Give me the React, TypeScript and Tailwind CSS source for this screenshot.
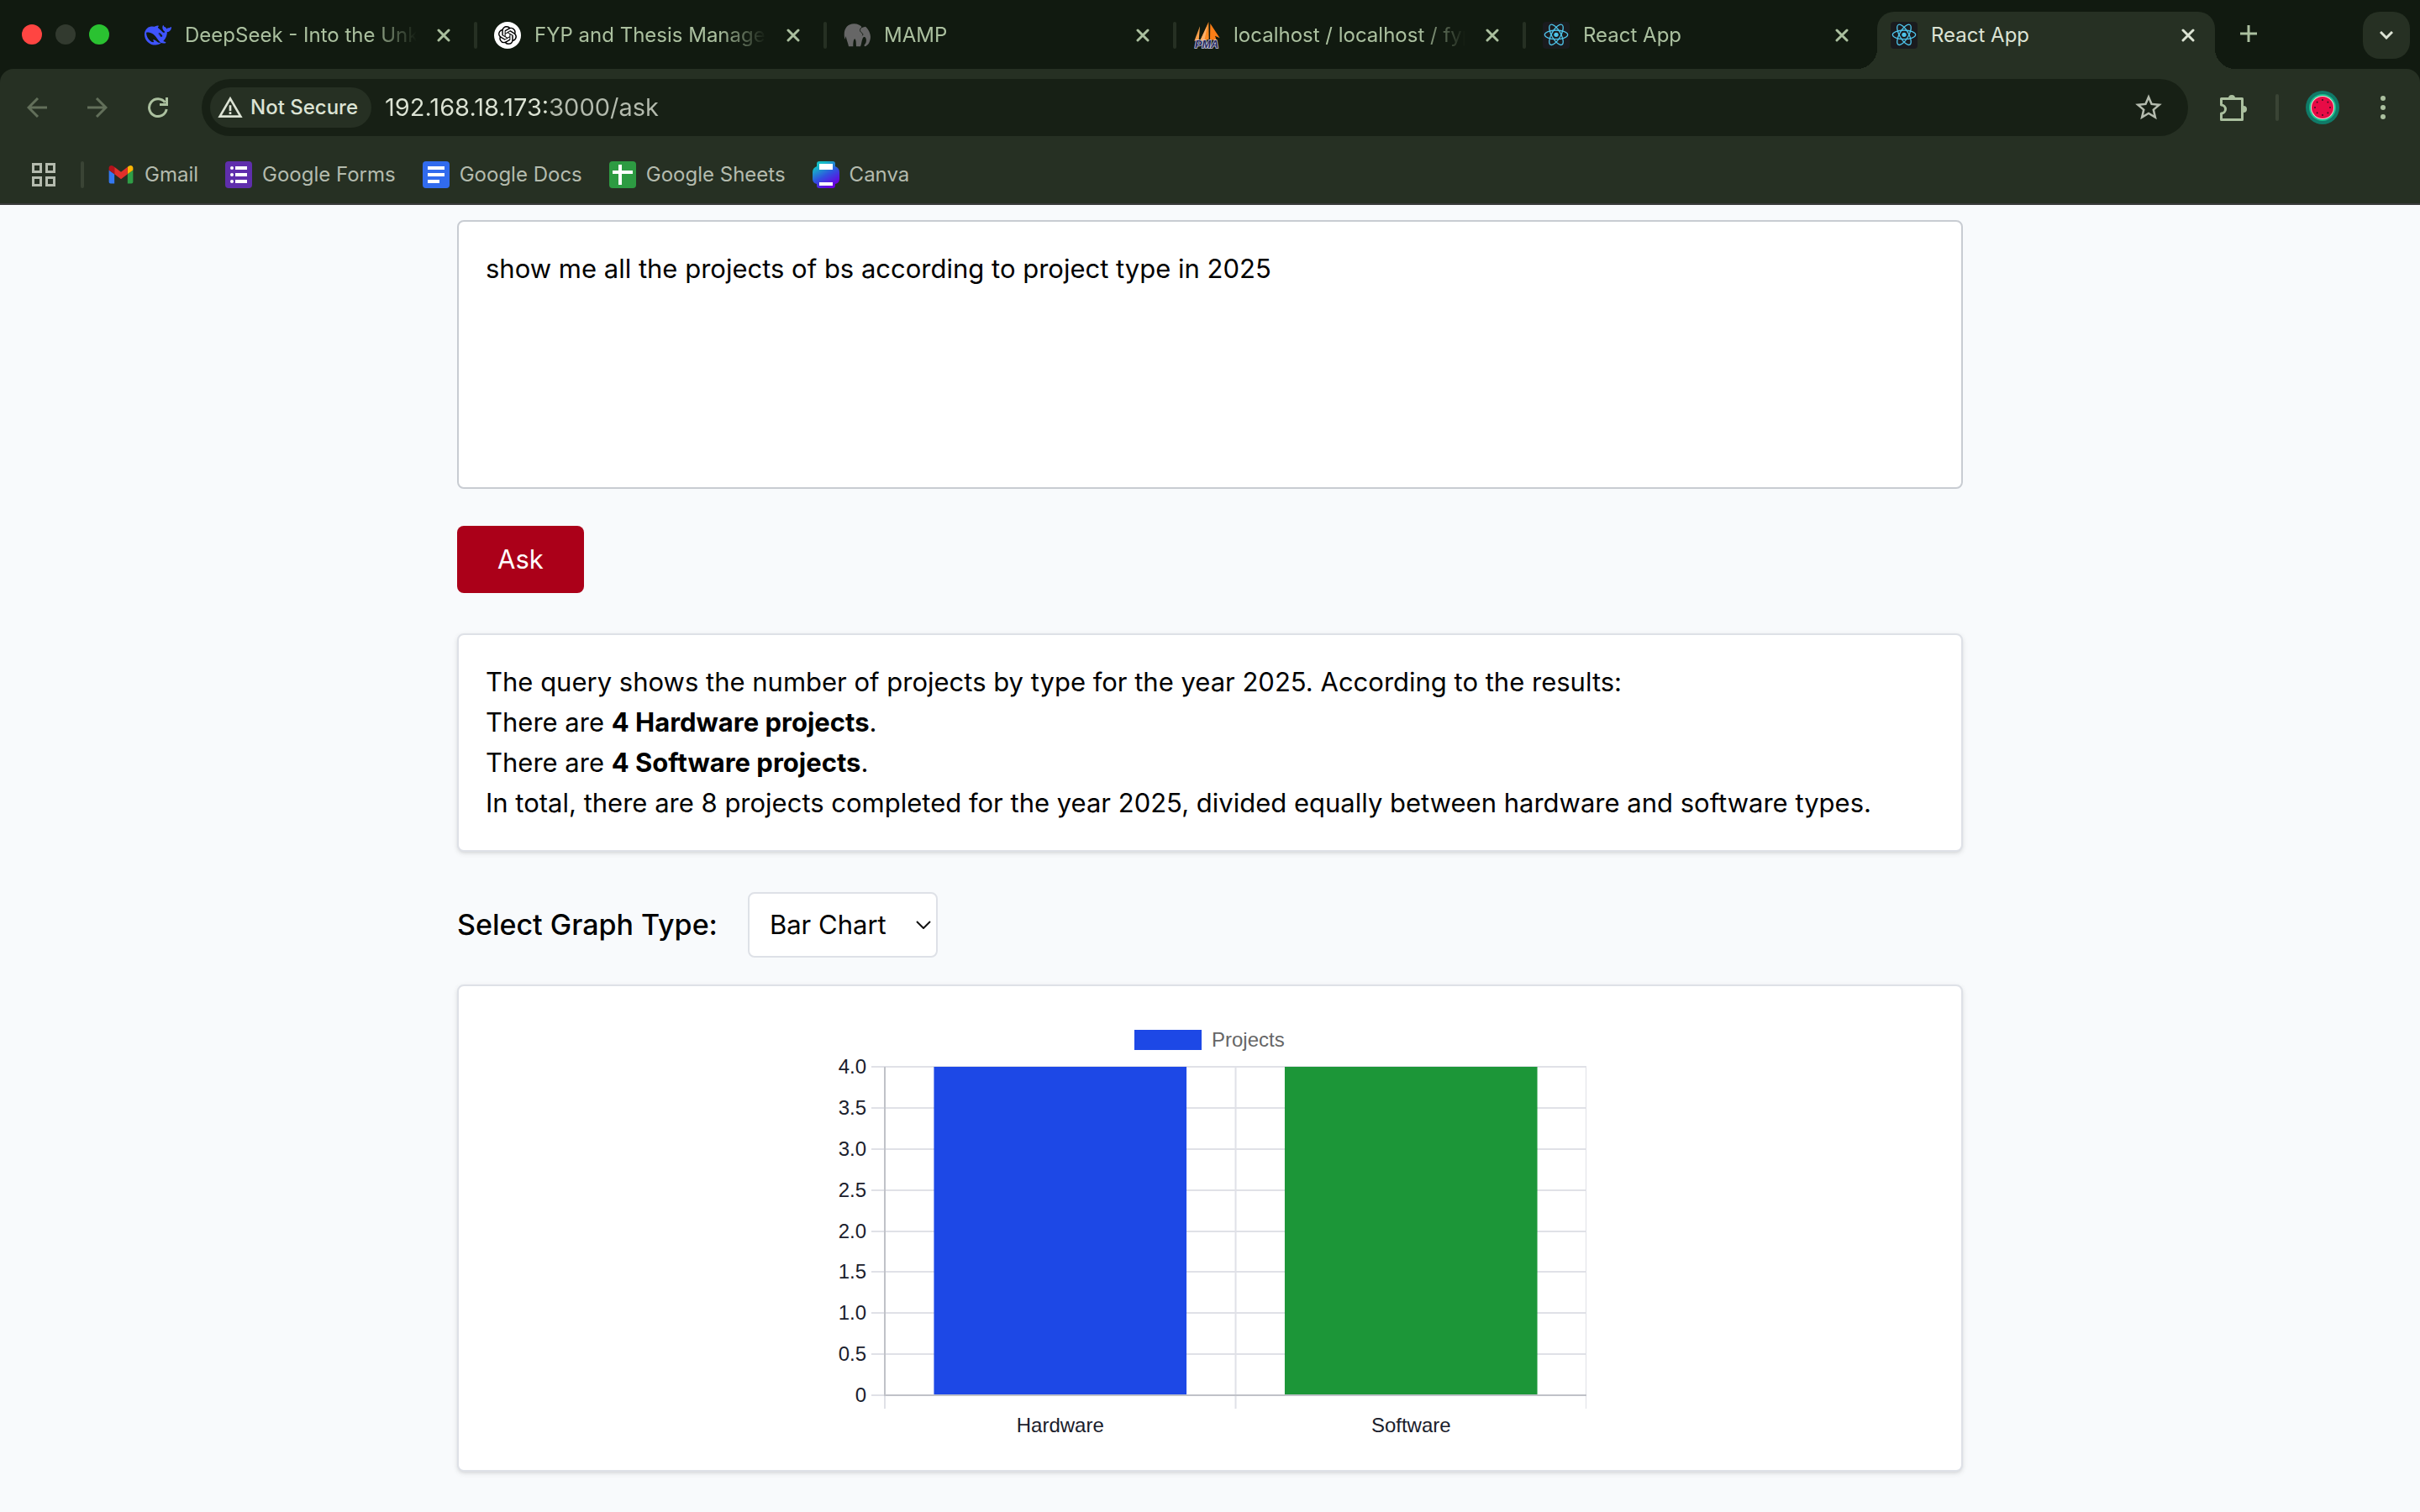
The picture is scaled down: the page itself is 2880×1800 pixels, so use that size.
import React, { useState } from 'react';
import { SiOpenai } from 'react-icons/si';
import { MdStarBorder, MdWarningAmber } from 'react-icons/md';

function DeepSeekIcon() {
  return (
    <svg viewBox="0 0 24 24" className="size-8" fill="#3f54fe" fillRule="evenodd" aria-hidden="true">
      <path d="M23.748 4.482c-.254-.124-.364.113-.512.234-.051.039-.094.09-.137.136-.372.397-.806.657-1.373.626-.829-.046-1.537.214-2.163.848-.133-.782-.575-1.248-1.247-1.548-.352-.156-.708-.311-.955-.65-.172-.241-.219-.51-.305-.774-.055-.16-.11-.323-.293-.35-.2-.031-.278.136-.356.276-.313.572-.434 1.202-.422 1.84.027 1.436.633 2.58 1.838 3.393.137.093.172.187.129.323-.082.28-.18.552-.266.833-.055.179-.137.217-.329.14a5.526 5.526 0 01-1.736-1.18c-.857-.828-1.631-1.742-2.597-2.458a11.365 11.365 0 00-.689-.471c-.985-.957.13-1.743.388-1.836.27-.098.093-.432-.779-.428-.872.004-1.67.295-2.687.684a3.055 3.055 0 01-.465.137 9.597 9.597 0 00-2.883-.102c-1.885.21-3.39 1.102-4.497 2.623C.082 8.606-.231 10.684.152 12.85c.403 2.284 1.569 4.175 3.36 5.653 1.858 1.533 3.997 2.284 6.438 2.14 1.482-.085 3.133-.284 4.994-1.86.47.234.962.327 1.78.397.63.059 1.236-.03 1.705-.128.735-.156.684-.837.419-.961-2.155-1.004-1.682-.595-2.113-.926 1.096-1.296 2.746-2.642 3.392-7.003.05-.347.007-.565 0-.845-.004-.17.035-.237.23-.256a4.173 4.173 0 001.545-.475c1.396-.763 1.96-2.015 2.093-3.517.02-.23-.004-.467-.247-.588zM11.581 18c-2.089-1.642-3.102-2.183-3.52-2.16-.392.024-.321.471-.235.763.09.288.207.486.371.739.114.167.192.416-.113.603-.673.416-1.842-.14-1.897-.167-1.361-.802-2.5-1.86-3.301-3.307-.774-1.393-1.224-2.887-1.298-4.482-.02-.386.093-.522.477-.592a4.696 4.696 0 011.529-.039c2.132.312 3.946 1.265 5.468 2.774.868.86 1.525 1.887 2.202 2.891.72 1.066 1.494 2.082 2.48 2.914.348.292.625.514.891.677-.802.09-2.14.11-3.054-.614zm1-6.44a.306.306 0 01.415-.287.302.302 0 01.2.288.306.306 0 01-.31.307.303.303 0 01-.304-.308zm3.11 1.596c-.2.081-.399.151-.59.16a1.245 1.245 0 01-.798-.254c-.274-.23-.47-.358-.552-.758a1.73 1.73 0 01.016-.588c.07-.327-.008-.537-.239-.727-.187-.156-.426-.199-.688-.199a.559.559 0 01-.254-.078c-.11-.054-.2-.19-.114-.358.028-.054.16-.186.192-.21.356-.202.767-.136 1.146.016.352.144.618.408 1.001.782.391.451.462.576.685.914.176.265.336.537.445.848.067.195-.019.354-.25.452z" />
    </svg>
  );
}

function ChatIcon() {
  return (
    <span className="flex size-8 items-center justify-center rounded-full bg-white text-black">
      <SiOpenai size={22} />
    </span>
  );
}

function ElephantIcon() {
  return (
    <svg viewBox="0 0 96 96" className="size-8" aria-hidden="true">
      <path
        fill="#666"
        d="M4 62C-3 30 10 7 37 7c13 0 23 5 29 13l12-3c9 8 18 22 18 37-1 18-8 30-20 34-4-2-3-5 1-9 4-6 5-14 2-21-3-6-9-5-11 1-4 9-4 19-8 29H45c-1-11 0-23-5-27-5 2-6 12-6 27H18C16 77 11 68 8 52c-2 3-1 7-4 10Z"
      />
      <path fill="none" stroke="#111a10" strokeWidth="3" d="M70 16c-11 6-15 14-8 21 5 4 9 7 5 12" />
    </svg>
  );
}

function SailIcon() {
  return (
    <svg viewBox="0 0 96 96" className="size-8" aria-hidden="true">
      <path fill="#f9a04a" d="M4 68 24 16 20 66Z" />
      <path fill="#fb8a24" d="M24 68 55 0 56 62 38 68Z" />
      <path fill="#fbb06a" d="M24 68 52 10 40 66Z" />
      <path fill="#fb7d16" d="M61 6 95 58 78 50 84 68 60 62Z" />
      <text
        x="48"
        y="94"
        textAnchor="middle"
        fontFamily="Liberation Sans, sans-serif"
        fontWeight="bold"
        fontStyle="italic"
        fontSize="38"
        fill="#27285c"
        stroke="#c9c9dd"
        strokeWidth="5"
        paintOrder="stroke"
      >
        PMA
      </text>
    </svg>
  );
}

function ReactIcon() {
  return (
    <svg viewBox="0 0 96 96" className="size-8" aria-hidden="true">
      <rect width="96" height="96" rx="12" fill="#1a1b1e" />
      <g fill="none" stroke="#4ec4ea" strokeWidth="4">
        <ellipse cx="48" cy="46" rx="41" ry="16" />
        <ellipse cx="48" cy="46" rx="41" ry="16" transform="rotate(60 48 46)" />
        <ellipse cx="48" cy="46" rx="41" ry="16" transform="rotate(120 48 46)" />
      </g>
      <circle cx="48" cy="46" r="8" fill="#4ec4ea" />
    </svg>
  );
}

function CloseIcon() {
  return (
    <svg viewBox="0 0 16 16" className="size-4" fill="none" stroke="currentColor" strokeWidth="3" strokeLinecap="round" aria-hidden="true">
      <path d="M2 2 14 14M14 2 2 14" />
    </svg>
  );
}

function ArrowIcon({ flip = false }: { flip?: boolean }) {
  return (
    <svg viewBox="0 0 24 24" className={flip ? 'size-6 -scale-x-100' : 'size-6'} fill="none" stroke="currentColor" strokeWidth="3" aria-hidden="true">
      <path d="M24 12H2M13 1 2 12 13 23" />
    </svg>
  );
}

function ReloadIcon() {
  return (
    <svg viewBox="0 0 24 24" className="size-6" fill="none" stroke="currentColor" strokeWidth="3" aria-hidden="true">
      <path d="M22.2 14A10.4 10.4 0 1 1 20.4 6" />
      <path d="M22.5 0v8.5H14" />
    </svg>
  );
}

function PuzzleIcon() {
  return (
    <svg viewBox="0 0 32 32" className="size-8" aria-hidden="true">
      <path
        fill="none"
        stroke="currentColor"
        strokeWidth="3"
        strokeLinejoin="round"
        d="M1.500 5.500h25v25h-25v-7.500a5 5 0 0 0 0-10Z"
      />
      <path fill="currentColor" d="M10 5a4 4 0 0 1 8 0ZM28 14a4 4 0 0 1 0 8Z" />
    </svg>
  );
}

const seeds = [0, 45, 90, 135, 180, 225, 270, 315];

function MelonAvatar() {
  return (
    <svg viewBox="0 0 40 40" className="size-10" aria-hidden="true">
      <circle cx="20" cy="20" r="20" fill="#107a68" />
      <circle cx="20" cy="20" r="16" fill="#1cc08f" />
      <circle cx="20" cy="20" r="14" fill="#f6d3cf" />
      <circle cx="20" cy="20" r="13" fill="#e80b46" />
      {seeds.map((angle) => (
        <circle key={angle} cx="20" cy="11" r="1" fill="#3a1020" transform={`rotate(${angle} 20 20)`} />
      ))}
    </svg>
  );
}

function GmailIcon() {
  return (
    <svg viewBox="47 27 98 98" className="size-8" aria-hidden="true">
      <path fill="#3478f0" d="M58 108h14V74L52 59v43c0 3.320 2.690 6 6 6" />
      <path fill="#2f9e46" d="M120 108h14c3.320 0 6-2.690 6-6V59l-20 15" />
      <path fill="#fbb504" d="M120 48v26l20-15v-8c0-7.420-8.470-11.650-14.400-7.200" />
      <path fill="#e2302a" d="M72 74V48l24 18 24-18v26L96 92" />
      <path fill="#b5121b" d="M52 51v8l20 15V48l-5.600-4.200c-5.940-4.450-14.400-.22-14.400 7.200" />
    </svg>
  );
}

function FormsIcon() {
  return (
    <svg viewBox="0 0 32 32" className="size-8" aria-hidden="true">
      <rect width="32" height="32" rx="4" fill="#5f2eac" />
      <g fill="#fff">
        <circle cx="8" cy="8" r="2" />
        <circle cx="8" cy="16" r="2" />
        <circle cx="8" cy="24" r="2" />
        <path d="M12 6h14v4H12ZM12 14h14v4H12ZM12 22h14v4H12Z" />
      </g>
    </svg>
  );
}

function DocsIcon() {
  return (
    <svg viewBox="0 0 32 32" className="size-8" aria-hidden="true">
      <rect width="32" height="32" rx="4" fill="#316bee" />
      <path fill="#fff" d="M6 6h20v4H6ZM6 14h20v4H6ZM6 22h14v4H6Z" />
    </svg>
  );
}

function SheetsIcon() {
  return (
    <svg viewBox="0 0 32 32" className="size-8" aria-hidden="true">
      <rect width="32" height="32" rx="4" fill="#2d9b42" />
      <path fill="#fff" d="M11 4h4v7h13v4H15v13h-4V15H4v-4h7Z" />
    </svg>
  );
}

function CanvaIcon() {
  return (
    <svg viewBox="0 0 32 32" className="size-8" aria-hidden="true">
      <defs>
        <linearGradient id="canva-fill" x1="6" y1="2" x2="22" y2="30" gradientUnits="userSpaceOnUse">
          <stop offset="0.1" stopColor="#14bcc6" />
          <stop offset="0.55" stopColor="#3050e0" />
          <stop offset="1" stopColor="#6a00e0" />
        </linearGradient>
      </defs>
      <path
        fill="url(#canva-fill)"
        d="M8 0h16q3 0 3 3v3q5 2 5 7v8q0 5-5 6v2q0 3-3 3H8q-3 0-3-3v-2q-5-1-5-6v-8q0-5 5-7V3q0-3 3-3Z"
      />
      <path fill="#fff" d="M8 3h16v7H8ZM8 25h16v4H8Z" />
    </svg>
  );
}

function AppsIcon() {
  return (
    <svg viewBox="0 0 28 28" className="size-7" fill="none" stroke="currentColor" strokeWidth="3" aria-hidden="true">
      <path d="M1.500 1.500h9v9h-9ZM17.500 1.500h9v9h-9ZM1.500 17.500h9v9h-9ZM17.500 17.500h9v9h-9Z" />
    </svg>
  );
}

const tabs = [
  { title: 'DeepSeek - Into the Unknown', icon: <DeepSeekIcon /> },
  { title: 'FYP and Thesis Management', icon: <ChatIcon /> },
  { title: 'MAMP', icon: <ElephantIcon /> },
  { title: 'localhost / localhost / fyp_db', icon: <SailIcon /> },
  { title: 'React App', icon: <ReactIcon /> },
];

const bookmarks = [
  { label: 'Gmail', icon: <GmailIcon /> },
  { label: 'Google Forms', icon: <FormsIcon /> },
  { label: 'Google Docs', icon: <DocsIcon /> },
  { label: 'Google Sheets', icon: <SheetsIcon /> },
  { label: 'Canva', icon: <CanvaIcon /> },
];

function TabStrip() {
  return (
    <div className="flex h-[82px] items-stretch bg-[#111a10] text-[24px] leading-8 text-[#abc09f]">
      <div className="flex w-[152px] shrink-0 items-center gap-4 pl-[26px]">
        <span className="size-6 rounded-full bg-[#ff4542]" />
        <span className="size-6 rounded-full bg-[#323a2f]" />
        <span className="size-6 rounded-full bg-[#2ac231]" />
      </div>
      <div role="tablist" className="flex min-w-0 items-stretch">
        {tabs.map((tab, i) => (
          <div key={i} className="flex w-[416px] min-w-0 items-center pt-0.5 pl-5">
            <button role="tab" aria-selected="false" className="flex min-w-0 flex-1 items-center gap-4 text-left">
              <span className="shrink-0">{tab.icon}</span>
              <span className="min-w-0 flex-1 overflow-hidden whitespace-nowrap [mask-image:linear-gradient(90deg,#000_calc(100%-56px),transparent)]">
                {tab.title}
              </span>
            </button>
            <button aria-label="Close tab" className="ml-4 flex size-8 shrink-0 items-center justify-center">
              <CloseIcon />
            </button>
            <span
              className={
                i < tabs.length - 1
                  ? 'ml-5 h-8 w-1 shrink-0 rounded-full bg-[#263023]'
                  : 'ml-5 h-8 w-1 shrink-0'
              }
            />
          </div>
        ))}
        <div className="relative mt-3.5 ml-0.5 flex w-[402px] min-w-0 items-center rounded-t-[20px] bg-[#263023] px-4 pb-3 text-[#dce3d4]">
          <span className="absolute bottom-0 -left-6 size-6 bg-[radial-gradient(circle_at_0_0,transparent_24px,#263023_24px)]" />
          <span className="absolute -right-6 bottom-0 size-6 bg-[radial-gradient(circle_at_100%_0,transparent_24px,#263023_24px)]" />
          <button role="tab" aria-selected="true" className="flex min-w-0 flex-1 items-center gap-4 text-left">
            <ReactIcon />
            <span className="truncate">React App</span>
          </button>
          <button aria-label="Close tab" className="flex size-8 shrink-0 items-center justify-center">
            <CloseIcon />
          </button>
        </div>
      </div>
      <button aria-label="New tab" className="ml-3 flex h-20 w-14 shrink-0 items-center justify-center">
        <svg viewBox="0 0 20 20" className="size-5" stroke="currentColor" strokeWidth="3" aria-hidden="true">
          <path d="M10 0V20M0 10H20" />
        </svg>
      </button>
      <button
        aria-label="Search tabs"
        className="mt-3.5 mr-3 ml-auto flex size-14 shrink-0 items-center justify-center rounded-[20px] bg-[#263023] text-[#dce3d4]"
      >
        <svg viewBox="0 0 16 10" className="h-2.5 w-4" fill="none" stroke="currentColor" strokeWidth="3" aria-hidden="true">
          <path d="M1 1 8 8 15 1" />
        </svg>
      </button>
    </div>
  );
}

function Toolbar() {
  return (
    <div className="flex h-[92px] items-center pr-4 pl-4 text-[#abc09f]">
      <div className="mr-6 flex gap-4">
        <button aria-label="Back" className="flex size-14 items-center justify-center text-[#626f5a]">
          <ArrowIcon />
        </button>
        <button aria-label="Forward" className="flex size-14 items-center justify-center text-[#626f5a]">
          <ArrowIcon flip />
        </button>
        <button aria-label="Reload" className="flex size-14 items-center justify-center">
          <ReloadIcon />
        </button>
      </div>
      <div className="flex h-[68px] min-w-0 flex-1 items-center rounded-full bg-[#172015] pr-7 pl-2.5">
        <button className="flex h-12 shrink-0 items-center gap-2 rounded-full bg-[#263023] pr-4 pl-2 text-[24px] font-medium text-[#dce3d4]">
          <MdWarningAmber size={32} />
          Not Secure
        </button>
        <input
          aria-label="Address"
          defaultValue="192.168.18.173:3000/ask"
          className="ml-4 min-w-0 flex-1 bg-[linear-gradient(90deg,#dce3d4_198px,#b4bbae_198px)] bg-clip-text text-[29px] leading-10 text-transparent outline-none"
        />
        <button aria-label="Bookmark this page" className="text-[#b4bbae]">
          <MdStarBorder size={38} />
        </button>
      </div>
      <button aria-label="Extensions" className="ml-6 flex h-14 w-15 items-center justify-center">
        <PuzzleIcon />
      </button>
      <span className="ml-5 h-8 w-1 rounded-full bg-[#3a4435]" />
      <button aria-label="Profile" className="ml-8">
        <MelonAvatar />
      </button>
      <button aria-label="Menu" className="ml-6 flex size-14 items-center justify-center">
        <svg viewBox="0 0 6 28" className="h-7 w-1.5" fill="currentColor" aria-hidden="true">
          <circle cx="3" cy="3" r="3" />
          <circle cx="3" cy="14" r="3" />
          <circle cx="3" cy="25" r="3" />
        </svg>
      </button>
    </div>
  );
}

function BookmarkBar() {
  return (
    <nav aria-label="Bookmarks" className="flex h-[68px] items-center pl-[38px] text-[24px] leading-8 text-[#b4bbae]">
      <button aria-label="Apps">
        <AppsIcon />
      </button>
      <span className="mr-7 ml-[30px] h-8 w-1 rounded-full bg-[#3a4435]" />
      <div className="flex gap-8">
        {bookmarks.map((b) => (
          <a key={b.label} href="#" className="flex items-center gap-3">
            {b.icon}
            {b.label}
          </a>
        ))}
      </div>
    </nav>
  );
}

const series = [
  { label: 'Hardware', value: 4, color: '#1d48e6' },
  { label: 'Software', value: 4, color: '#1c9638' },
];

const ticks = [4, 3.5, 3, 2.5, 2, 1.5, 1, 0.5, 0];

function BarChart() {
  const left = 61;
  const right = 896;
  const top = 64;
  const bottom = 455;
  const slot = (right - left) / series.length;
  const barWidth = slot * 0.72;
  const yOf = (v: number) => Math.round(bottom - (v / 4) * (bottom - top));
  return (
    <svg
      viewBox="0 0 896 512"
      role="img"
      aria-label="Projects by type"
      className="mx-auto block w-full max-w-4xl"
      fontFamily="Liberation Sans, Arial, sans-serif"
      fontSize="24"
    >
      <rect x="358" y="20" width="80" height="24" fill="#1d48e6" />
      <text x="450" y="40" fill="#666">
        Projects
      </text>
      <g stroke="#e0e1e7" strokeWidth="2">
        {ticks.map((t) => (
          <path key={t} d={`M${left - 16} ${yOf(t)}H${right}`} />
        ))}
        {[0, 1, 2].map((i) => (
          <path key={i} d={`M${left + slot * i} ${top}V${bottom + 16}`} />
        ))}
      </g>
      <g fill="#1a202c" textAnchor="end">
        {ticks.map((t) => (
          <text key={t} x="39" y={yOf(t) + 8}>
            {t === 0 ? '0' : t.toFixed(1)}
          </text>
        ))}
      </g>
      {series.map((s, i) => (
        <g key={s.label}>
          <rect
            x={left + slot * i + (slot - barWidth) / 2}
            y={yOf(s.value)}
            width={barWidth}
            height={bottom - yOf(s.value)}
            fill={s.color}
          />
          <text x={left + slot * (i + 0.5)} y="499" fill="#1a202c" textAnchor="middle">
            {s.label}
          </text>
        </g>
      ))}
      <path d={`M${left} ${top}V${bottom}H${right}`} fill="none" stroke="#c0c2c8" strokeWidth="2" />
    </svg>
  );
}

const card =
  'rounded-lg border-2 border-[#dee1e7] bg-white p-8 shadow-[0_2px_6px_rgba(0,0,0,0.1),0_2px_4px_-2px_rgba(0,0,0,0.1)]';

export default function App() {
  const [question, setQuestion] = useState('show me all the projects of bs according to project type in 2025');
  const [graph, setGraph] = useState('Bar Chart');
  return (
    <div className="min-h-screen bg-[#f8fafc] font-['Inter',sans-serif] text-black">
      <header className="bg-[#111a10]">
        <TabStrip />
        <div className="rounded-t-2xl border-b-2 border-[#3a3b3b] bg-[#263023]">
          <Toolbar />
          <BookmarkBar />
        </div>
      </header>
      <main className="mx-auto flex max-w-[1792px] flex-col items-start pt-[18px] pb-12 text-[31px] leading-[48px]">
        <textarea
          aria-label="Question"
          value={question}
          onChange={(e) => setQuestion(e.target.value)}
          className="block h-80 w-full resize-none rounded-lg border-2 border-[#c8ccd2] bg-white p-8 outline-none"
        />
        <button className="mt-11 rounded-lg bg-[#ab0019] px-12 py-4 text-white">Ask</button>
        <section className={`mt-12 w-full ${card}`}>
          <p>The query shows the number of projects by type for the year 2025. According to the results:</p>
          <p>
            There are <strong>4 Hardware projects</strong>.
          </p>
          <p>
            There are <strong>4 Software projects</strong>.
          </p>
          <p>
            In total, there are 8 projects completed for the year 2025, divided equally between hardware and software
            types.
          </p>
        </section>
        <div className="mt-12 flex items-center gap-9">
          <label htmlFor="graph-type" className="text-[34px] font-medium">
            Select Graph Type:
          </label>
          <div className="relative">
            <select
              id="graph-type"
              value={graph}
              onChange={(e) => setGraph(e.target.value)}
              className="block h-[78px] w-[226px] appearance-none rounded-lg border-2 border-[#dee1e7] bg-white pl-6 outline-none"
            >
              <option>Bar Chart</option>
              <option>Pie Chart</option>
              <option>Line Chart</option>
            </select>
            <svg
              viewBox="0 0 18 10"
              className="pointer-events-none absolute top-[34px] right-2 h-2.5 w-[18px]"
              fill="none"
              stroke="#111"
              strokeWidth="2"
              aria-hidden="true"
            >
              <path d="M1 1 9 9 17 1" />
            </svg>
          </div>
        </div>
        <section className={`mt-8 w-full ${card}`}>
          <BarChart />
        </section>
      </main>
    </div>
  );
}
